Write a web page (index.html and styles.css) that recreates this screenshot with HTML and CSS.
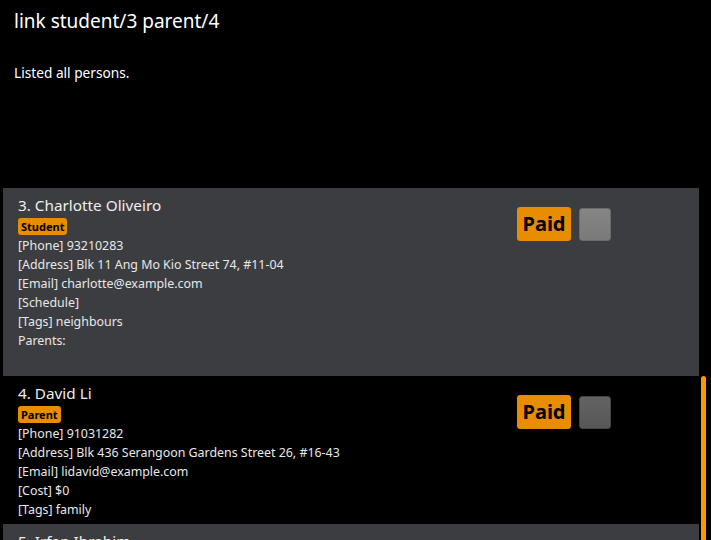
FILE: index.html
```html
<!DOCTYPE html>
<html>
<head>
<meta charset="utf-8">
<link rel="stylesheet" href="styles.css">
</head>
<body>
<div class="app">
  <div class="command">link student/3 parent/4</div>
  <div class="result">Listed all persons.</div>
  <div class="list-area">
    <div class="list">
      <div class="card card-grey">
        <div class="info">
          <div class="name">3. Charlotte Oliveiro</div>
          <div class="badges"><span class="role">Student</span></div>
          <div class="field">[Phone] 93210283</div>
          <div class="field">[Address] Blk 11 Ang Mo Kio Street 74, #11-04</div>
          <div class="field">[Email] charlotte@example.com</div>
          <div class="field">[Schedule]</div>
          <div class="field">[Tags] neighbours</div>
          <div class="field">Parents:</div>
        </div>
        <div class="status">
          <span class="paid">Paid</span>
          <span class="check check-light"></span>
        </div>
      </div>
      <div class="card card-black">
        <div class="info">
          <div class="name">4. David Li</div>
          <div class="badges"><span class="role">Parent</span></div>
          <div class="field">[Phone] 91031282</div>
          <div class="field">[Address] Blk 436 Serangoon Gardens Street 26, #16-43</div>
          <div class="field">[Email] lidavid@example.com</div>
          <div class="field">[Cost] $0</div>
          <div class="field">[Tags] family</div>
        </div>
        <div class="status">
          <span class="paid">Paid</span>
          <span class="check check-dark"></span>
        </div>
      </div>
      <div class="card card-grey">
        <div class="info">
          <div class="name">5. Irfan Ibrahim</div>
        </div>
      </div>
    </div>
    <div class="track"><div class="thumb" style="margin-top:188px"></div></div>
  </div>
</div>
</body>
</html>
```
FILE: styles.css
```css
html, body {
  margin: 0;
  padding: 0;
  background: #000;
  overflow: hidden;
}
.app {
  width: 711px;
  height: 540px;
  font-family: "Segoe UI", "Noto Sans", sans-serif;
  color: #fff;
  display: flex;
  flex-direction: column;
  overflow: hidden;
}
.command {
  font-size: 19px;
  line-height: 24px;
  padding: 9px 0 0 14px;
  height: 33px;
  box-sizing: border-box;
}
.result {
  font-size: 13.7px;
  line-height: 18px;
  padding: 31px 0 0 14px;
  height: 155px;
  box-sizing: border-box;
}
.list-area {
  display: flex;
  flex: 1;
  min-height: 0;
  padding-left: 3px;
  overflow: hidden;
}
.list {
  width: 696px;
  display: flex;
  flex-direction: column;
  overflow: hidden;
}
.card {
  display: flex;
  justify-content: space-between;
  padding: 6px 0 0 15px;
  box-sizing: border-box;
  flex-shrink: 0;
}
.card-grey { background: #3c3d40; }
.card-black { background: #000; }
.card:nth-child(1) { height: 188px; }
.card:nth-child(2) { height: 148px; }
.card:nth-child(3) { height: 60px; }
.name {
  font-size: 15.3px;
  line-height: 22px;
  color: #eeeeee;
}
.badges {
  height: 19px;
  display: flex;
  align-items: center;
  margin-top: 1px;
}
.role {
  background: #e88c00;
  color: #000;
  font-weight: bold;
  font-size: 11px;
  line-height: 17px;
  padding: 0 3px;
  border-radius: 3px;
}
.field {
  font-size: 12.4px;
  line-height: 19px;
  color: #e8e8e8;
}
.status {
  display: flex;
  gap: 8px;
  margin-right: 88px;
  margin-top: 13px;
  align-items: flex-start;
}
.paid {
  background: #e88c00;
  color: #000;
  font-weight: bold;
  font-size: 20px;
  line-height: 34px;
  width: 54px;
  text-align: center;
  border-radius: 3px;
}
.check {
  width: 30px;
  height: 31px;
  border: 1px solid #555;
  border-radius: 3px;
  margin-top: 1px;
}
.check-light { background: linear-gradient(#858585, #7a7a7a); border-color: #6a6a6a; }
.check-dark { background: linear-gradient(#636363, #575757); border-color: #444; }
.track {
  width: 5px;
  margin-left: 2px;
}
.thumb {
  width: 5px;
  height: 400px;
  background: #ff9800;
  border-radius: 3px 3px 0 0;
}
```
